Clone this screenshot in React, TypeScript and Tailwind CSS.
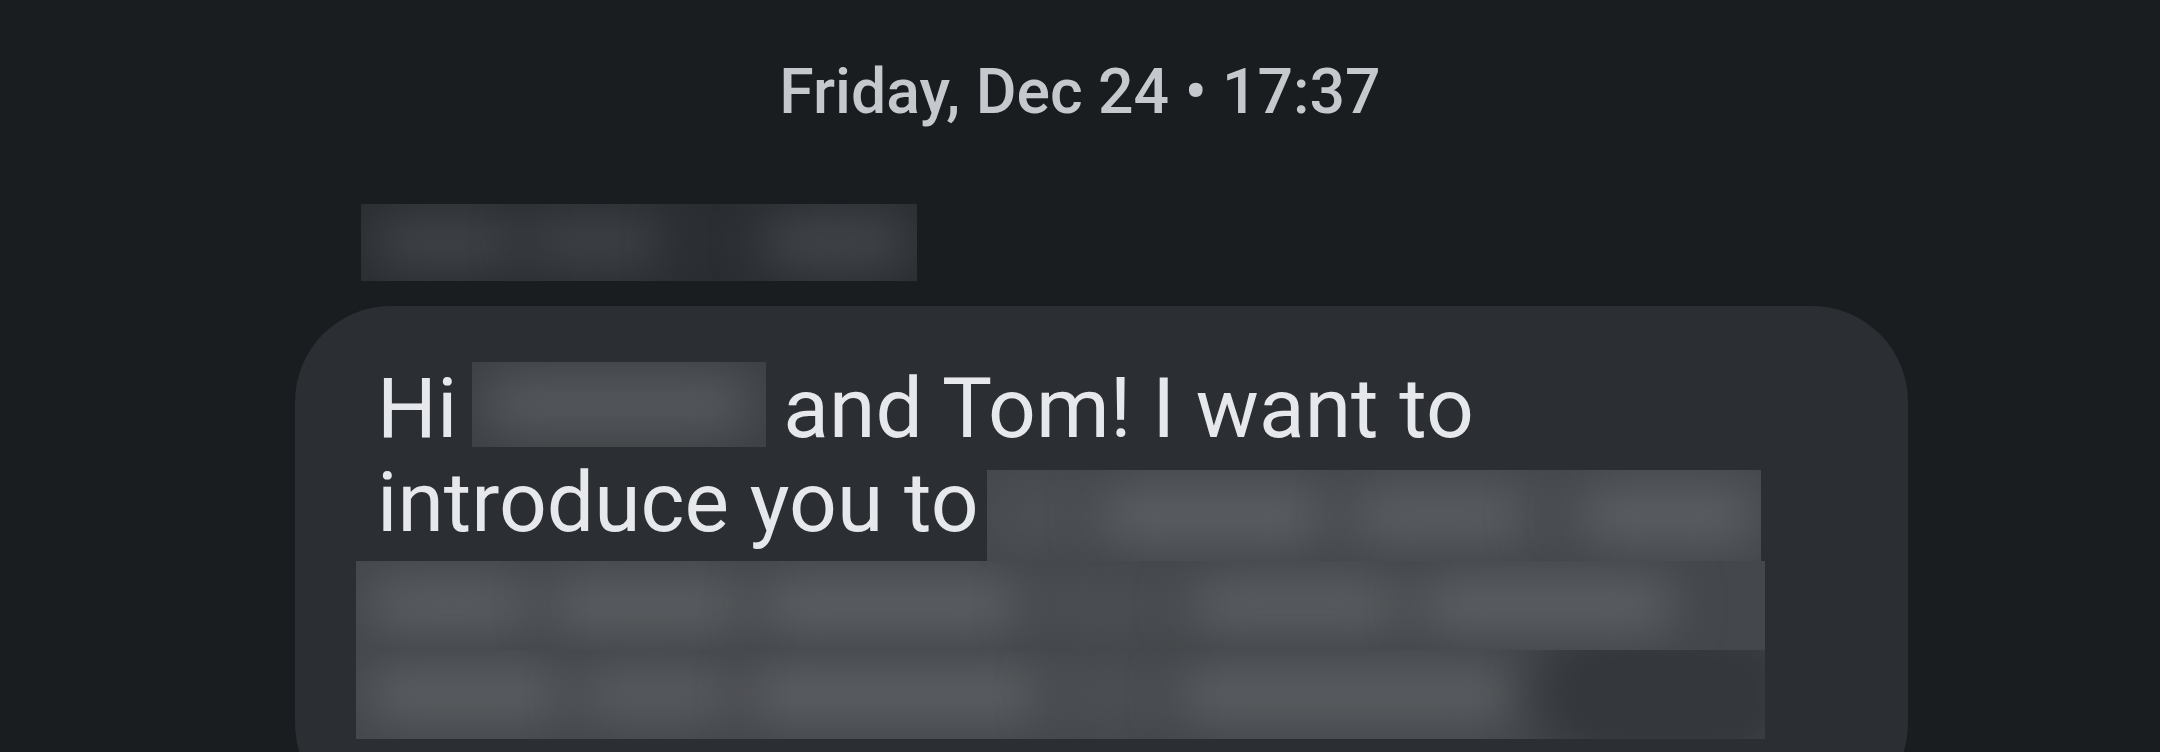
import React from "react";

type Blob = { w: number; c: string; h?: number; gap?: number };

function BlurRow({ blobs, className }: { blobs: Blob[]; className: string }) {
  return (
    <div className={`flex items-center overflow-hidden ${className}`}>
      {blobs.map((b, i) => (
        <span
          key={i}
          className="shrink-0 rounded-full blur-xl"
          style={{ width: b.w, height: b.h ?? 56, background: b.c, marginLeft: b.gap ?? 0 }}
        />
      ))}
    </div>
  );
}

export default function App() {
  return (
    <div className="h-[752px] w-[2160px] overflow-hidden bg-[#1a1d20] font-['Roboto',sans-serif]">
      <div className="pt-[61px] text-center text-[62.5px] leading-none font-medium text-[#c5c8cd]">
        Friday, Dec 24 • 17:37
      </div>
      <div className="pl-[295px] pr-[252px]">
        <BlurRow
          className="ml-[66px] mt-[80px] h-[77px] w-[556px] bg-[#2a2d31] pl-[10px]"
          blobs={[
            { w: 150, c: "#404347" },
            { w: 150, c: "#3e4145", gap: 0 },
            { w: 90, c: "#2c2f33", gap: 0 },
            { w: 150, c: "#42454a", gap: 0 },
          ]}
        />
        <div className="mt-[25px] rounded-[96px] bg-[#2b2e32] pl-[82px] pt-[56px] pb-[80px] text-[84px] leading-[94px] text-[#e6e8eb]">
          <div className="flex h-[94px] items-start whitespace-nowrap">
            <span>Hi</span>
            <BlurRow
              className="ml-[15px] h-[85px] w-[294px] bg-[#3d4044] pl-[10px]"
              blobs={[{ w: 270, c: "#55585c", h: 60 }]}
            />
            <span className="ml-[17px]">and Tom! I want to</span>
          </div>
          <div className="flex items-start whitespace-nowrap">
            <span>introduce you to</span>
            <BlurRow
              className="ml-[8px] mt-[14px] h-[91px] w-[774px] bg-[#45484c] pl-[0px]"
              blobs={[
                { w: 100, c: "#4e5155" },
                { w: 230, c: "#5c5f63", gap: 10 },
                { w: 190, c: "#5a5d61", gap: 20 },
                { w: 40, c: "#4a4d51", gap: 0 },
                { w: 180, c: "#5c5f63", gap: 0 },
              ]}
            />
          </div>
          <div className="-ml-[21px] flex h-[178px] w-[1409px] flex-col bg-[#44474b]">
            <BlurRow
              className="h-[89px] pl-[10px]"
              blobs={[
                { w: 170, c: "#5a5d61" },
                { w: 200, c: "#5b5e62", gap: 10 },
                { w: 270, c: "#5c5f63", gap: 10 },
                { w: 150, c: "#4b4e52", gap: 0 },
                { w: 220, c: "#5a5d61", gap: 10 },
                { w: 260, c: "#5c5f63", gap: 10 },
              ]}
            />
            <BlurRow
              className="h-[89px] pl-[10px]"
              blobs={[
                { w: 200, c: "#5b5e62" },
                { w: 160, c: "#585b5f", gap: 10 },
                { w: 300, c: "#5c5f63", gap: 10 },
                { w: 120, c: "#4d5054", gap: 0 },
                { w: 340, c: "#5b5e62", gap: 10 },
                { w: 260, c: "#34373b", h: 140, gap: 20 },
              ]}
            />
          </div>
        </div>
      </div>
    </div>
  );
}
